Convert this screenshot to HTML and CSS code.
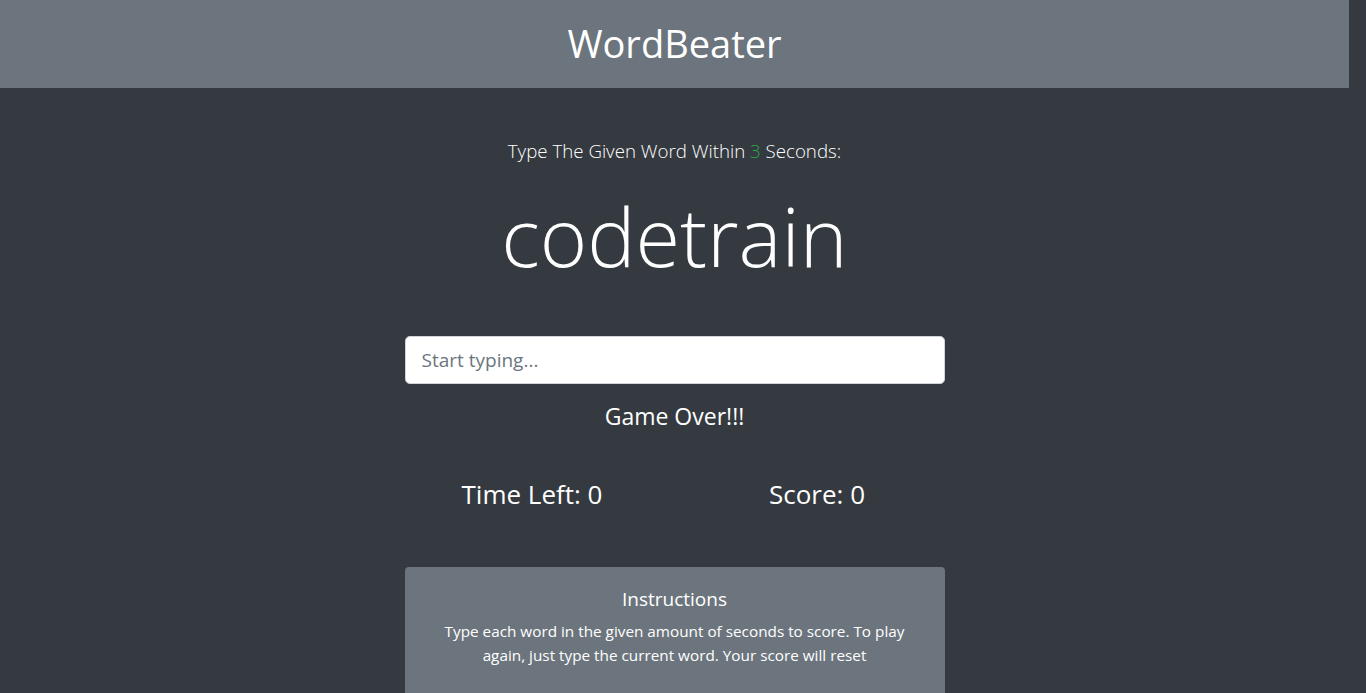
FILE: index.html
```html
<!DOCTYPE html>
<html lang="en">
<head>
<meta charset="utf-8">
<title>WordBeater</title>
<link rel="stylesheet" href="styles.css">
</head>
<body>
<div class="page">
  <header class="header">
    <h1 class="brand">WordBeater</h1>
  </header>
  <main class="container">
    <div class="col">
      <p class="lead">Type The Given Word Within <span class="seconds">3</span> Seconds:</p>
      <h2 class="word">codetrain</h2>
      <input class="word-input" type="text" placeholder="Start typing..." autofocus>
      <h4 class="message">Game Over!!!</h4>
      <div class="stats">
        <h3 class="stat">Time Left: <span>0</span></h3>
        <h3 class="stat">Score: <span>0</span></h3>
      </div>
      <div class="card">
        <h5 class="card-title">Instructions</h5>
        <p class="card-text">Type each word in the given amount of seconds to score. To play again, just type the current word. Your score will reset</p>
      </div>
    </div>
  </main>
</div>
</body>
</html>
```

FILE: styles.css
```css
* { box-sizing: border-box; }
html, body { margin: 0; padding: 0; }
body {
  background: #343a40;
  color: #fff;
  font-family: "Open Sans", "Noto Sans", sans-serif;
  font-size: 16px;
  line-height: 1.5;
  overflow: hidden;
  height: 693px;
}
.page { width: 1349px; }
.header {
  background: #6c757d;
  padding: 19px 16px 13px;
  text-align: center;
}
.brand {
  margin: 0 0 8px;
  font-size: 38px;
  font-weight: 400;
  line-height: 48px;
}
.container {
  width: 1140px;
  margin: 48px auto 0;
  display: flex;
  justify-content: center;
}
.col {
  width: 540px;
  text-align: center;
}
.lead {
  margin: 0 0 16px;
  font-size: 18.7px;
  font-weight: 300;
  line-height: 30px;
}
.seconds { color: #28a745; }
.word {
  margin: 0 0 48px;
  padding-top: 2px;
  font-size: 81px;
  font-weight: 300;
  line-height: 103.6px;
}
.word-input {
  display: block;
  width: 100%;
  height: 48px;
  padding: 8px 16px;
  font-family: inherit;
  font-size: 19px;
  color: #495057;
  background: #fff;
  border: 1px solid #ced4da;
  border-radius: 4.8px;
  outline: none;
}
.word-input::placeholder { color: #6c757d; }
.message {
  margin: 18px 0 0;
  font-size: 23px;
  font-weight: 400;
  line-height: 28.8px;
}
.stats {
  display: grid;
  grid-template-columns: 1fr 1fr;
  margin: 48px -15px 0;
}
.stat {
  margin: 0 0 8px;
  font-size: 26px;
  font-weight: 400;
  line-height: 33.6px;
}
.card {
  margin-top: 47px;
  background: #6c757d;
  border-radius: 4px;
  padding: 20px;
  height: 160px;
}
.card-title {
  margin: 0 0 8px;
  font-size: 19px;
  font-weight: 400;
  line-height: 24px;
}
.card-text {
  margin: 0;
  padding: 0 6px;
  font-size: 15.3px;
  line-height: 24px;
}
```
